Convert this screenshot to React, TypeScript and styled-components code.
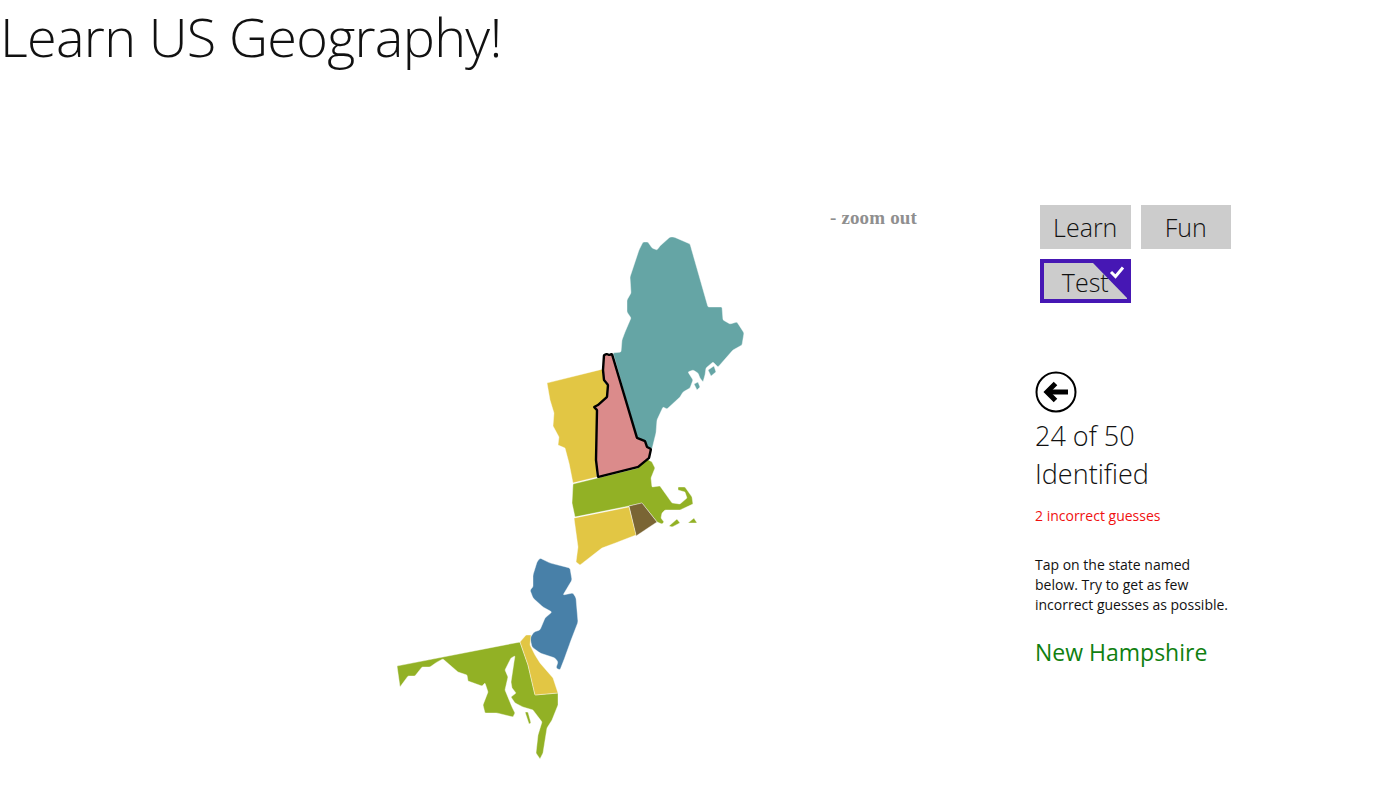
import React from "react";
import styled, { createGlobalStyle } from "styled-components";

const Global = createGlobalStyle`
  html, body { margin: 0; padding: 0; background: #fff; }
  body { font-family: "Open Sans", "Noto Sans", "Liberation Sans", sans-serif; color: #111; }
`;

const Page = styled.div`
  width: 1378px;
  height: 810px;
  overflow: hidden;
  display: flex;
  flex-direction: column;
`;

const Title = styled.h1`
  margin: 0;
  min-height: 72px;
  font-size: 54px;
  line-height: 72px;
  font-weight: 300;
  letter-spacing: -0.7px;
  color: #111;
  white-space: nowrap;
`;

const Main = styled.main`
  display: flex;
  padding-top: 133px;
  align-items: flex-start;
`;

const MapSvg = styled.svg`
  display: block;
  flex: none;
  width: 360px;
  height: 540px;
  margin: 25px 0 0 390px;
`;

const ZoomLink = styled.a`
  flex: none;
  width: 205px;
  margin: 3px 0 0 80px;
  font-family: "Liberation Serif", serif;
  font-weight: 700;
  font-size: 19px;
  line-height: 20px;
  letter-spacing: 0.15px;
  color: #8f8f8f;
`;

const Side = styled.aside`
  flex: none;
  width: 200px;
  display: flex;
  flex-direction: column;
`;

const ModeGrid = styled.div`
  display: grid;
  grid-template-columns: 90.5px 90.5px;
  grid-auto-rows: 44px;
  gap: 10px;
  margin-left: 5px;
`;

const ModeButton = styled.button<{ $selected?: boolean }>`
  position: relative;
  padding: ${(p) => (p.$selected ? "2px 0 0" : "0")};
  border: ${(p) => (p.$selected ? "4px solid #4617b4" : "none")};
  background: #cccccc;
  font-family: inherit;
  font-size: 25px;
  font-weight: 300;
  color: #111;
  box-sizing: border-box;
  overflow: hidden;
`;

const ButtonLabel = styled.span`
  position: relative;
`;

const CheckCorner = styled.svg`
  position: absolute;
  top: 0;
  right: 0;
  width: 34px;
  height: 35px;
`;

const BackIcon = styled.svg`
  display: block;
  width: 42px;
  height: 42px;
  margin: 68px 0 0 0;
`;

const Progress = styled.div`
  margin-top: 4px;
  font-size: 27px;
  line-height: 38px;
  font-weight: 300;
  color: #111;
`;

const Incorrect = styled.p`
  margin: 13px 0 0;
  font-size: 14px;
  line-height: 20px;
  color: #f01010;
`;

const Instructions = styled.p`
  margin: 29px 0 0;
  width: 200px;
  font-size: 14px;
  line-height: 20px;
  color: #111;
`;

const StateName = styled.div`
  margin-top: 20px;
  font-size: 23px;
  line-height: 34px;
  color: #108010;
`;

const StatePath = styled.path<{ $fill: string }>`
  fill: ${(p) => p.$fill};
  stroke: #ffffff;
  stroke-width: 0.4;
  stroke-linejoin: round;
`;

const TargetPath = styled.path`
  fill: #db8b8b;
  stroke: #000;
  stroke-width: 2.4;
  stroke-linejoin: round;
`;

function soften(d: string, cut = 1.1): string {
  return d
    .split("Z")
    .map((s) => s.trim())
    .filter(Boolean)
    .map((s) => {
      const nums = s.replace(/[ML]/g, " ").trim().split(/\s+/).map(Number);
      const pts: [number, number][] = [];
      for (let i = 0; i < nums.length; i += 2) pts.push([nums[i], nums[i + 1]]);
      const n = pts.length;
      const toward = (a: [number, number], b: [number, number]) => {
        const dx = b[0] - a[0];
        const dy = b[1] - a[1];
        const len = Math.hypot(dx, dy) || 1;
        const c = Math.min(cut, len / 2.2);
        return [a[0] + (dx / len) * c, a[1] + (dy / len) * c].map((v) => v.toFixed(2)).join(" ");
      };
      let out = "";
      pts.forEach((p, i) => {
        const prev = pts[(i + n - 1) % n];
        const next = pts[(i + 1) % n];
        out += `${i === 0 ? "M" : "L"}${toward(p, prev)} Q${p[0]} ${p[1]} ${toward(p, next)} `;
      });
      return out + "Z";
    })
    .join(" ");
}

const Maine = "M613 353 L621 352 L622 340 L625 332 L631 318 L627 312 L627 300 L631 293 L630 277 L639 250 L643 242 L648 242 L652 248 L657 250 L660 246 L670 237 L674 237 L690 244 L708 307 L722 307 L723 320 L730 324 L737 322 L744 333 L742 345 L733 350 L718 367 L713 362 L706 368 L705 375 L703 382 L700 378 L698 373 L693 370 L688 372 L693 380 L690 388 L683 392 L680 397 L667 409 L663 407 L657 420 L656 433 L652 449 L647 447 L645 441 L637 438 Z";
const MaineIslands = "M694 384 L698 382 L700 387 L697 390 Z M708 370 L714 366 L716 372 L711 376 Z";
const Hampshire = "M604 355 L607 354 L609 355 L612 354 L637 438 L645 441 L647 447 L651 449 L649 458 L638 467 L598 477 L596 460 L597 410 L594 407 L598 405 L607 397 L608 385 L604 380 L603 370 Z";
const Vermont = "M547 383 L603 369 L604 382 L608 386 L607 397 L598 405 L594 407 L597 410 L596 460 L597 477 L573 483 L569 463 L565 448 L558 445 L559 437 L553 426 L554 413 L550 400 Z";
const Mass = "M573 484 L638 468 L647 459 L652 462 L655 468 L651 478 L652 487 L660 486 L672 503 L680 504 L687 498 L685 492 L678 490 L678 487 L685 487 L692 497 L693 504 L680 510 L670 510 L665 510 L662 513 L661 518 L664 522 L662 524 L657 522 L642 503 L629 506 L575 517 L572 503 Z M669 526 L677 519 L680 523 L672 527 Z M688 523 L694 518 L697 523 Z";
const Rhode = "M629 506 L642 503 L657 522 L645 530 L636 536 Z";
const Conn = "M574 518 L629 507 L636 535 L618 542 L602 548 L580 565 L576 562 L578 547 Z";
const Jersey = "M540 558 L550 563 L570 568 L572 580 L563 595 L573 593 L576 598 L578 622 L570 643 L565 657 L560 670 L556 668 L558 662 L555 658 L540 653 L532 647 L530 638 L534 632 L540 630 L545 618 L552 612 L543 607 L533 598 L530 590 L533 587 L533 575 L537 562 Z";
const Delaware = "M520 642 L526 635 L531 635 L530 645 L535 655 L540 663 L553 678 L558 693 L535 695 L528 665 Z";
const Maryland = "M397 666 L520 642 L528 665 L535 695 L558 693 L558 705 L552 720 L547 728 L543 753 L540 759 L536 753 L538 735 L542 722 L533 710 L523 707 L515 703 L511 697 L516 693 L512 688 L511 682 L514 662 L515 656 L511 658 L505 670 L508 677 L505 690 L512 707 L515 713 L513 717 L497 713 L485 713 L483 705 L488 692 L485 683 L482 686 L468 681 L467 675 L458 672 L443 659 L437 662 L430 667 L422 667 L415 676 L408 676 L400 687 Z M525 712 L528 712 L531 723 L529 724 Z";

export default function App() {
  return (
    <Page>
      <Global />
      <Title>Learn US Geography!</Title>
      <Main>
        <MapSvg viewBox="390 230 360 540">
          <StatePath $fill="#65a5a5" d={soften(Maine)} />
          <StatePath $fill="#65a5a5" d={soften(MaineIslands, 0.6)} />
          <StatePath $fill="#e2c644" d={soften(Vermont, 0.6)} />
          <StatePath $fill="#92b125" d={soften(Mass, 0.8)} />
          <StatePath $fill="#7a6534" d={soften(Rhode, 0.4)} />
          <StatePath $fill="#e2c644" d={soften(Conn, 0.6)} />
          <StatePath $fill="#4880a8" d={soften(Jersey, 1.5)} />
          <StatePath $fill="#92b125" d={soften(Maryland, 0.8)} />
          <StatePath $fill="#e2c644" d={soften(Delaware, 0.6)} />
          <TargetPath d={soften(Hampshire, 0.6)} />
        </MapSvg>
        <ZoomLink>- zoom out</ZoomLink>
        <Side>
          <ModeGrid>
            <ModeButton>Learn</ModeButton>
            <ModeButton>Fun</ModeButton>
            <ModeButton $selected>
              <CheckCorner viewBox="0 0 34 35">
                <path d="M0 0 H34 V35 Z" fill="#4617b4" />
                <path d="M18 9 L22.5 13.5 L30 4.5" fill="none" stroke="#fff" strokeWidth="3" />
              </CheckCorner>
              <ButtonLabel>Test</ButtonLabel>
            </ModeButton>
          </ModeGrid>
          <BackIcon viewBox="0 0 42 42">
            <circle cx="21" cy="21" r="19.5" fill="none" stroke="#000" strokeWidth="2" />
            <path d="M33 21 H14" stroke="#000" strokeWidth="5" fill="none" />
            <path d="M20.5 12.5 L12 21 L20.5 29.5" stroke="#000" strokeWidth="5" fill="none" />
          </BackIcon>
          <Progress>
            24 of 50
            <br />
            Identified
          </Progress>
          <Incorrect>2 incorrect guesses</Incorrect>
          <Instructions>
            Tap on the state named below. Try to get as few incorrect guesses as possible.
          </Instructions>
          <StateName>New Hampshire</StateName>
        </Side>
      </Main>
    </Page>
  );
}
